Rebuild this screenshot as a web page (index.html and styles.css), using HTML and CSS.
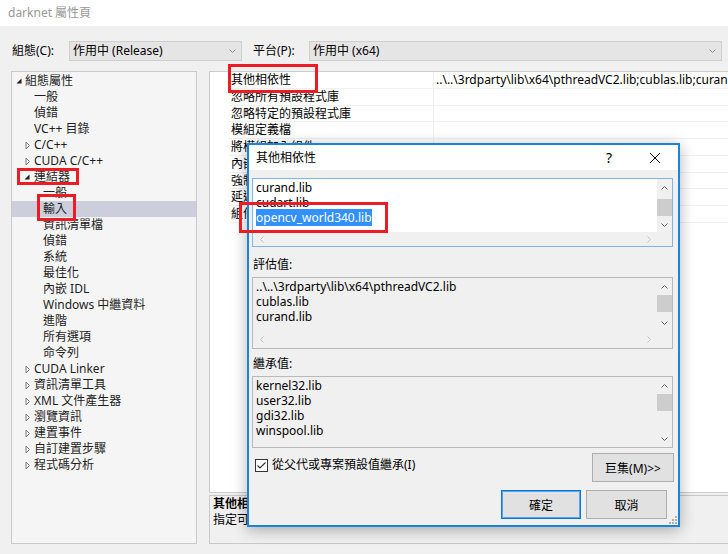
FILE: index.html
```html
<!DOCTYPE html>
<html lang="zh-Hant">
<head>
    <meta charset="UTF-8">
    <meta name="viewport" content="width=device-width, initial-scale=1.0">
    <title>darknet 屬性頁</title>
    <link rel="stylesheet" href="styles.css">
</head>
<body>
    <div class="window">
        <div class="titlebar">darknet 屬性頁</div>

        <!-- Configuration / platform selectors -->
        <div class="toolbar">
            <span class="tool-label">組態(C):</span>
            <div class="combo combo-config">
                <span>作用中 (Release)</span>
                <svg class="chevron" viewBox="0 0 7 4"><path d="M0.5 0.5L3.5 3.5L6.5 0.5"/></svg>
            </div>
            <span class="tool-label platform-label">平台(P):</span>
            <div class="combo combo-platform">
                <span>作用中 (x64)</span>
                <svg class="chevron" viewBox="0 0 7 4"><path d="M0.5 0.5L3.5 3.5L6.5 0.5"/></svg>
            </div>
        </div>

        <div class="content">
            <!-- Property page tree -->
            <div class="tree">
                <div class="node lvl0"><span class="tog"><svg class="tri-open" viewBox="0 0 9 9"><path d="M5.5 1.5V6.5H0.5Z"/></svg></span>組態屬性</div>
                <div class="node lvl1"><span class="tog"></span>一般</div>
                <div class="node lvl1"><span class="tog"></span>偵錯</div>
                <div class="node lvl1"><span class="tog"></span>VC++ 目錄</div>
                <div class="node lvl1"><span class="tog"><svg class="tri-closed" viewBox="0 0 9 9"><path d="M1 1L4.5 4.5L1 8Z"/></svg></span>C/C++</div>
                <div class="node lvl1"><span class="tog"><svg class="tri-closed" viewBox="0 0 9 9"><path d="M1 1L4.5 4.5L1 8Z"/></svg></span>CUDA C/C++</div>
                <div class="node lvl1"><span class="tog"><svg class="tri-open" viewBox="0 0 9 9"><path d="M4.5 1.5V6.5H-0.5Z"/></svg></span>連結器</div>
                <div class="node lvl2"><span class="tog"></span>一般</div>
                <div class="node lvl2 selected"><span class="tog"></span>輸入</div>
                <div class="node lvl2"><span class="tog"></span>資訊清單檔</div>
                <div class="node lvl2"><span class="tog"></span>偵錯</div>
                <div class="node lvl2"><span class="tog"></span>系統</div>
                <div class="node lvl2"><span class="tog"></span>最佳化</div>
                <div class="node lvl2"><span class="tog"></span>內嵌 IDL</div>
                <div class="node lvl2"><span class="tog"></span>Windows 中繼資料</div>
                <div class="node lvl2"><span class="tog"></span>進階</div>
                <div class="node lvl2"><span class="tog"></span>所有選項</div>
                <div class="node lvl2"><span class="tog"></span>命令列</div>
                <div class="node lvl1"><span class="tog"><svg class="tri-closed" viewBox="0 0 9 9"><path d="M1 1L4.5 4.5L1 8Z"/></svg></span>CUDA Linker</div>
                <div class="node lvl1"><span class="tog"><svg class="tri-closed" viewBox="0 0 9 9"><path d="M1 1L4.5 4.5L1 8Z"/></svg></span>資訊清單工具</div>
                <div class="node lvl1"><span class="tog"><svg class="tri-closed" viewBox="0 0 9 9"><path d="M1 1L4.5 4.5L1 8Z"/></svg></span>XML 文件產生器</div>
                <div class="node lvl1"><span class="tog"><svg class="tri-closed" viewBox="0 0 9 9"><path d="M1 1L4.5 4.5L1 8Z"/></svg></span>瀏覽資訊</div>
                <div class="node lvl1"><span class="tog"><svg class="tri-closed" viewBox="0 0 9 9"><path d="M1 1L4.5 4.5L1 8Z"/></svg></span>建置事件</div>
                <div class="node lvl1"><span class="tog"><svg class="tri-closed" viewBox="0 0 9 9"><path d="M1 1L4.5 4.5L1 8Z"/></svg></span>自訂建置步驟</div>
                <div class="node lvl1"><span class="tog"><svg class="tri-closed" viewBox="0 0 9 9"><path d="M1 1L4.5 4.5L1 8Z"/></svg></span>程式碼分析</div>
            </div>

            <div class="right-pane">
                <!-- Property grid -->
                <div class="prop-grid">
                    <div class="prop-row"><span class="prop-name">其他相依性</span><span class="prop-value">..\..\3rdparty\lib\x64\pthreadVC2.lib;cublas.lib;curand.lib;cudart.lib;opencv_world340.lib;%(AdditionalDependencies)</span></div>
                    <div class="prop-row"><span class="prop-name">忽略所有預設程式庫</span><span class="prop-value"></span></div>
                    <div class="prop-row"><span class="prop-name">忽略特定的預設程式庫</span><span class="prop-value"></span></div>
                    <div class="prop-row"><span class="prop-name">模組定義檔</span><span class="prop-value"></span></div>
                    <div class="prop-row"><span class="prop-name">將模組加入組件</span><span class="prop-value"></span></div>
                    <div class="prop-row"><span class="prop-name">內嵌 Managed 資源檔</span><span class="prop-value"></span></div>
                    <div class="prop-row"><span class="prop-name">強制符號參考</span><span class="prop-value"></span></div>
                    <div class="prop-row"><span class="prop-name">延遲載入的 DLL</span><span class="prop-value"></span></div>
                    <div class="prop-row"><span class="prop-name">組件連結資源</span><span class="prop-value"></span></div>
                </div>
                <div class="desc">
                    <div class="desc-title">其他相依性</div>
                    <div>指定可加入連結命令列的其他項目。</div>
                </div>
            </div>
        </div>
    </div>

    <!-- Additional dependencies dialog -->
    <div class="dialog">
        <div class="dlg-title">
            <span class="dlg-caption">其他相依性</span>
            <span class="dlg-btn help">?</span>
            <span class="dlg-btn close"><svg viewBox="0 0 10 10"><path d="M0 0L10 10M10 0L0 10"/></svg></span>
        </div>
        <div class="dlg-body">
            <div class="listbox edit">
                <div class="lines">
                    <div>curand.lib</div>
                    <div>cudart.lib</div>
                    <div><span class="sel">opencv_world340.lib</span></div>
                </div>
                <div class="vscroll">
                    <span class="sbtn"><svg class="arrow-v" viewBox="0 0 7 4"><path d="M0.5 3.5L3.5 0.5L6.5 3.5"/></svg></span>
                    <span class="track"><span class="thumb thumb-down"></span></span>
                    <span class="sbtn"><svg class="arrow-v" viewBox="0 0 7 4"><path d="M0.5 0.5L3.5 3.5L6.5 0.5"/></svg></span>
                </div>
                <div class="hscroll">
                    <span class="sbtn"><svg class="arrow-h" viewBox="0 0 4 7"><path d="M3.5 0.5L0.5 3.5L3.5 6.5"/></svg></span>
                    <span class="track"></span>
                    <span class="sbtn"><svg class="arrow-h" viewBox="0 0 4 7"><path d="M0.5 0.5L3.5 3.5L0.5 6.5"/></svg></span>
                </div>
                <div class="corner"></div>
            </div>

            <div class="field-label label-eval">評估值:</div>
            <div class="listbox box-eval">
                <div class="lines">
                    <div>..\..\3rdparty\lib\x64\pthreadVC2.lib</div>
                    <div>cublas.lib</div>
                    <div>curand.lib</div>
                </div>
                <div class="vscroll">
                    <span class="sbtn"><svg class="arrow-v" viewBox="0 0 7 4"><path d="M0.5 3.5L3.5 0.5L6.5 3.5"/></svg></span>
                    <span class="track"><span class="thumb"></span></span>
                    <span class="sbtn"><svg class="arrow-v" viewBox="0 0 7 4"><path d="M0.5 0.5L3.5 3.5L6.5 0.5"/></svg></span>
                </div>
                <div class="hscroll">
                    <span class="sbtn"><svg class="arrow-h" viewBox="0 0 4 7"><path d="M3.5 0.5L0.5 3.5L3.5 6.5"/></svg></span>
                    <span class="track"></span>
                    <span class="sbtn"><svg class="arrow-h" viewBox="0 0 4 7"><path d="M0.5 0.5L3.5 3.5L0.5 6.5"/></svg></span>
                </div>
                <div class="corner"></div>
            </div>

            <div class="field-label label-inherit">繼承值:</div>
            <div class="listbox box-inherit">
                <div class="lines">
                    <div>kernel32.lib</div>
                    <div>user32.lib</div>
                    <div>gdi32.lib</div>
                    <div>winspool.lib</div>
                </div>
                <div class="vscroll">
                    <span class="sbtn"><svg class="arrow-v" viewBox="0 0 7 4"><path d="M0.5 3.5L3.5 0.5L6.5 3.5"/></svg></span>
                    <span class="track"><span class="thumb"></span></span>
                    <span class="sbtn"><svg class="arrow-v" viewBox="0 0 7 4"><path d="M0.5 0.5L3.5 3.5L6.5 0.5"/></svg></span>
                </div>
            </div>

            <div class="inherit-row">
                <label class="check">
                    <span class="checkbox"><svg viewBox="0 0 11 11"><path d="M1.5 5.5L4 8L9.5 2.5"/></svg></span>
                    從父代或專案預設值繼承(I)
                </label>
                <button class="btn macro">巨集(M)&gt;&gt;</button>
            </div>

            <div class="footer">
                <button class="btn ok">確定</button>
                <button class="btn cancel">取消</button>
            </div>
        </div>
        <svg class="grip" viewBox="0 0 8 8"><path d="M6 0h2v2h-2zM3 3h2v2h-2zM6 3h2v2h-2zM0 6h2v2h-2zM3 6h2v2h-2zM6 6h2v2h-2z"/></svg>
    </div>

    <!-- Red annotation boxes -->
    <div class="mark mark-prop"></div>
    <div class="mark mark-linker"></div>
    <div class="mark mark-input"></div>
    <div class="mark mark-lib"></div>
</body>
</html>
```

FILE: styles.css
```css
/* Base */
* {
    box-sizing: border-box;
}
body {
    margin: 0;
    width: 728px;
    height: 554px;
    overflow: hidden;
    position: relative;
    background-color: #f0f0f0;
    font-family: "Noto Sans", "Noto Sans CJK TC", sans-serif;
    font-size: 12px;
    color: #000;
}
.window {
    height: 554px;
    display: flex;
    flex-direction: column;
}
.titlebar {
    height: 26px;
    line-height: 26px;
    padding-left: 8px;
    background-color: #fff;
    color: #999;
}

/* Toolbar */
.toolbar {
    display: flex;
    align-items: center;
    padding: 15px 0 10px 12px;
}
.tool-label {
    width: 57px;
    line-height: 20px;
    flex-shrink: 0;
}
.platform-label {
    width: 56px;
    margin-left: 11px;
}
.combo {
    height: 20px;
    flex-shrink: 0;
    display: flex;
    align-items: center;
    justify-content: space-between;
    padding: 0 5px 0 3px;
    background-color: #e5e5e5;
    border: 1px solid #cfcfcf;
    line-height: 18px;
}
.combo-config {
    width: 173px;
}
.combo-platform {
    width: 413px;
}
.chevron {
    width: 7px;
    height: 4px;
    fill: none;
    stroke: #888;
}

/* Main content */
.content {
    display: flex;
    gap: 12px;
    height: 473px;
    padding-left: 11px;
}
.tree {
    width: 186px;
    flex-shrink: 0;
    padding-top: 1px;
    background-color: #f5f5f5;
    border: 1px solid #c9c9c9;
    color: #1e1e1e;
}
.node {
    height: 16px;
    line-height: 16px;
    display: flex;
    align-items: center;
    white-space: nowrap;
}
.node.selected {
    background-color: #cccedb;
}
.lvl0 {
    padding-left: 4px;
}
.lvl1 {
    padding-left: 13px;
}
.lvl2 {
    padding-left: 22px;
}
.tog {
    width: 9px;
    height: 9px;
    flex-shrink: 0;
}
.tog svg {
    display: block;
    width: 9px;
    height: 9px;
    overflow: visible;
}
.tri-open {
    fill: #1e1e1e;
}
.tri-closed {
    fill: none;
    stroke: #7a7a7a;
}

.right-pane {
    width: 540px;
    flex-shrink: 0;
    display: flex;
    flex-direction: column;
    gap: 2px;
}
.prop-grid {
    height: 422px;
    padding-left: 19px;
    background-color: #fff;
    border: 1px solid #cccccc;
    border-right: none;
}
.prop-row {
    height: 16.75px;
    display: flex;
    line-height: 16px;
    border-bottom: 1px solid #f0f0f0;
    white-space: nowrap;
}
.prop-name {
    width: 204px;
    flex-shrink: 0;
    padding-left: 2px;
}
.prop-value {
    padding-left: 2px;
    border-left: 1px solid #f0f0f0;
}
.desc {
    flex: 1;
    padding-left: 3px;
    line-height: 16px;
    border: 1px solid #c8c8c8;
    border-right: none;
    white-space: nowrap;
}
.desc-title {
    font-weight: bold;
}

/* Dialog */
.dialog {
    position: absolute;
    left: 247px;
    top: 143px;
    width: 433px;
    height: 384px;
    display: flex;
    flex-direction: column;
    background-color: #f0f0f0;
    border: 2px solid #1b84d8;
    box-shadow: 0 3px 14px rgba(0, 0, 0, 0.3);
}
.dlg-title {
    height: 25px;
    display: flex;
    background-color: #fff;
}
.dlg-caption {
    flex: 1;
    padding-left: 7px;
    line-height: 25px;
}
.dlg-btn {
    width: 46px;
    height: 25px;
    display: flex;
    align-items: center;
    justify-content: center;
}
.help {
    font-size: 14px;
}
.close svg {
    width: 10px;
    height: 10px;
    stroke: #000;
    stroke-width: 1;
}
.dlg-body {
    flex: 1;
    padding: 8px 5px 0 3px;
}
.listbox {
    display: grid;
    grid-template-columns: 1fr 15px;
    border: 1px solid #b9b9b9;
}
.edit {
    grid-template-rows: 53px 14px;
    border-color: #7eb4ea;
}
.edit .lines {
    background-color: #fff;
}
.box-eval {
    grid-template-rows: 53px 17px;
}
.box-inherit {
    grid-template-rows: 70px;
}
.lines {
    padding: 1px 0 0 3px;
    line-height: 15px;
    overflow: hidden;
    white-space: nowrap;
}
.sel {
    background-color: #3390ff;
    color: #fff;
}
.vscroll {
    display: flex;
    flex-direction: column;
    background-color: #f0f0f0;
}
.vscroll .sbtn {
    height: 17px;
}
.hscroll {
    display: flex;
    background-color: #f0f0f0;
}
.hscroll .sbtn {
    width: 17px;
}
.sbtn {
    display: flex;
    align-items: center;
    justify-content: center;
    flex-shrink: 0;
}
.track {
    flex: 1;
}
.thumb {
    display: block;
    height: 17px;
    background-color: #cdcdcd;
}
.thumb-down {
    margin-top: 3px;
}
.arrow-v {
    width: 7px;
    height: 4px;
    fill: none;
    stroke: #606060;
}
.arrow-h {
    width: 4px;
    height: 7px;
    fill: none;
    stroke: #c2c2c2;
}
.corner {
    background-color: #f0f0f0;
}
.field-label {
    line-height: 16px;
    padding-left: 1px;
}
.label-eval {
    padding-top: 10px;
    padding-bottom: 4px;
}
.label-inherit {
    padding-top: 7px;
    padding-bottom: 4px;
}
.inherit-row {
    display: flex;
    justify-content: space-between;
    align-items: flex-start;
    margin-top: 5px;
    height: 29px;
}
.check {
    display: flex;
    align-items: center;
    gap: 4px;
    margin: 4px 0 0 3px;
    line-height: 16px;
}
.checkbox {
    width: 13px;
    height: 13px;
    padding: 0;
    background-color: #fff;
    border: 1px solid #333;
}
.checkbox svg {
    display: block;
    width: 11px;
    height: 11px;
    fill: none;
    stroke: #333;
    stroke-width: 1.2;
}
.btn {
    height: 29px;
    padding: 0;
    font: inherit;
    color: #000;
    background-color: #e1e1e1;
    border: 1px solid #adadad;
}
.macro {
    width: 82px;
    margin-right: -1px;
}
.footer {
    display: flex;
    justify-content: flex-end;
    gap: 5px;
    margin: 8px 6px 0 0;
}
.ok {
    width: 80px;
    border-color: #0078d7;
    box-shadow: inset 0 0 0 1px #5aa6e6;
}
.cancel {
    width: 81px;
}
.grip {
    position: absolute;
    right: 1px;
    bottom: 1px;
    width: 8px;
    height: 8px;
    fill: #b0b0b0;
}

/* Red annotation boxes */
.mark {
    position: absolute;
    border: 3px solid #ed1c24;
}
.mark-prop {
    left: 228px;
    top: 64px;
    width: 90px;
    height: 29px;
}
.mark-linker {
    left: 17px;
    top: 168px;
    width: 62px;
    height: 17px;
}
.mark-input {
    left: 37px;
    top: 194px;
    width: 39px;
    height: 27px;
}
.mark-lib {
    left: 239px;
    top: 202px;
    width: 149px;
    height: 31px;
}
```
